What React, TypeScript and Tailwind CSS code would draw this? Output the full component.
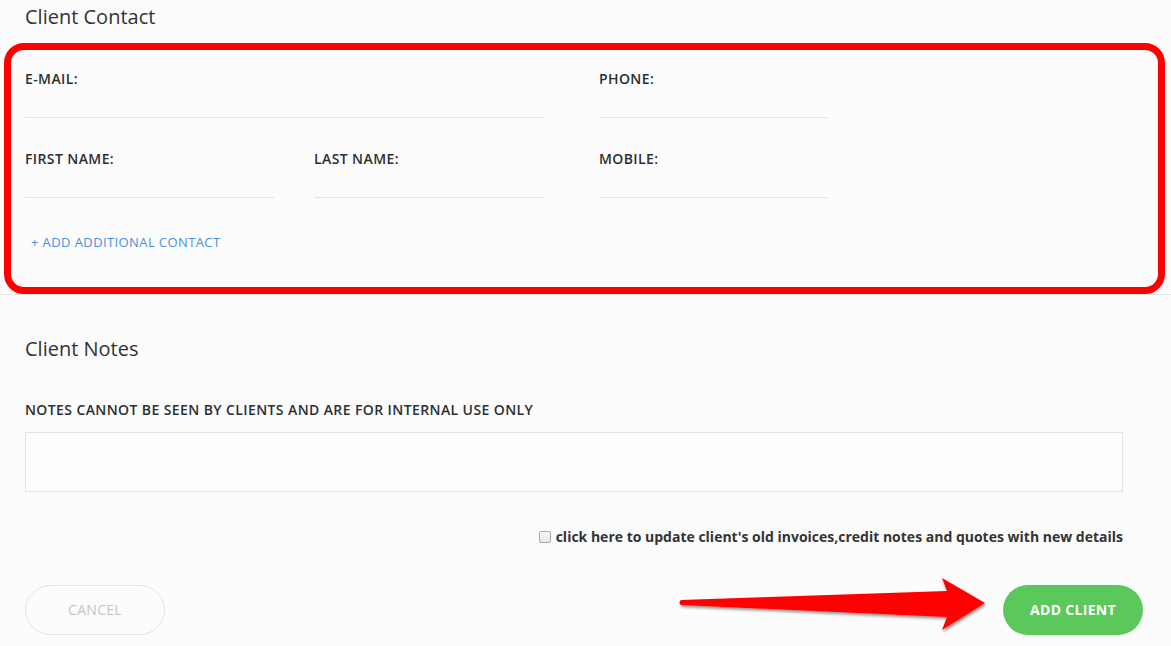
import React from "react";

const font = { fontFamily: '"Open Sans", "Liberation Sans", sans-serif' };

function Field({ label, w }: { label: string; w: string }) {
  return (
    <div className={`flex flex-col ${w}`}>
      <label className="text-[14px] leading-[20px] font-semibold tracking-[0.4px] text-[#2b2f33]">{label}</label>
      <input className="h-[29px] w-full border-b border-[#e3e3e3] bg-transparent outline-none" />
    </div>
  );
}

export default function App() {
  return (
    <div className="relative w-[1171px] h-[646px] overflow-hidden bg-[#fcfcfc] text-[#333]" style={font}>
      {/* Client Contact */}
      <div className="pl-[25px] pr-[28px]">
        <h2 className="text-[20px] leading-[34px] font-normal text-[#333]">Client Contact</h2>
        <div className="mt-[35px] flex gap-[55px]">
          <Field label="E-MAIL:" w="w-[519px]" />
          <Field label="PHONE:" w="w-[229px]" />
        </div>
        <div className="mt-[31px] flex">
          <Field label="FIRST NAME:" w="w-[249px]" />
          <div className="w-[40px]" />
          <Field label="LAST NAME:" w="w-[230px]" />
          <div className="w-[55px]" />
          <Field label="MOBILE:" w="w-[229px]" />
        </div>
        <div className="mt-[36px] h-[16px] pl-[6px] text-[13px] leading-[16px] tracking-[0.4px] text-[#4a8ee6]">
          + ADD ADDITIONAL CONTACT
        </div>
      </div>
      <div className="mt-[44px] h-px w-full bg-[#e3e3e3]" />

      {/* Client Notes */}
      <div className="pl-[25px] pr-[28px]">
        <h2 className="mt-[37px] text-[20px] leading-[34px] font-normal text-[#333]">Client Notes</h2>
        <div className="mt-[34px] text-[14px] leading-[20px] font-semibold tracking-[0.4px] text-[#2b2f33]">
          NOTES CANNOT BE SEEN BY CLIENTS AND ARE FOR INTERNAL USE ONLY
        </div>
        <textarea className="mt-[12px] mr-[20px] block h-[60px] w-[1098px] resize-none border border-[#e3e3e3] bg-[#fdfdfd] outline-none" />
        <div className="mt-[35px] mr-[20px] flex h-[20px] items-center justify-end gap-[5px]">
          <span className="h-[12px] w-[12px] rounded-[2px] border border-[#a8a8a8] bg-gradient-to-b from-[#fafafa] to-[#e6e6e6]" />
          <span className="text-[14px] leading-[20px] font-bold text-[#333]">
            click here to update client's old invoices,credit notes and quotes with new details
          </span>
        </div>
        <div className="mt-[38px] flex items-center justify-between">
          <button className="h-[50px] w-[140px] rounded-full border border-[#e3e3e3] bg-[#fcfcfc] text-[14px] leading-[20px] tracking-[0.3px] text-[#c4c4c4]">
            CANCEL
          </button>
          <button className="h-[50px] w-[140px] rounded-full bg-[#5ac85a] text-[14px] leading-[20px] tracking-[0.3px] font-bold text-white">
            ADD CLIENT
          </button>
        </div>
      </div>

      {/* annotation: red box */}
      <div className="pointer-events-none absolute left-[4px] top-[43px] h-[251px] w-[1161px] rounded-[20px] border-[7px] border-[#ff0000]" />

      {/* annotation: arrow */}
      <svg className="pointer-events-none absolute left-0 top-0" width="1171" height="646" viewBox="0 0 1171 646">
        <defs>
          <filter id="sh" x="-10%" y="-50%" width="120%" height="200%">
            <feDropShadow dx="1" dy="2" stdDeviation="1.5" floodColor="#000" floodOpacity="0.45" />
          </filter>
        </defs>
        <path
          d="M681 600 L947 591 L942 578 L985 603 L942 630 L947 617 L681 605 Q678 602.5 681 600 Z"
          fill="#ff0000"
          filter="url(#sh)"
        />
      </svg>
    </div>
  );
}
